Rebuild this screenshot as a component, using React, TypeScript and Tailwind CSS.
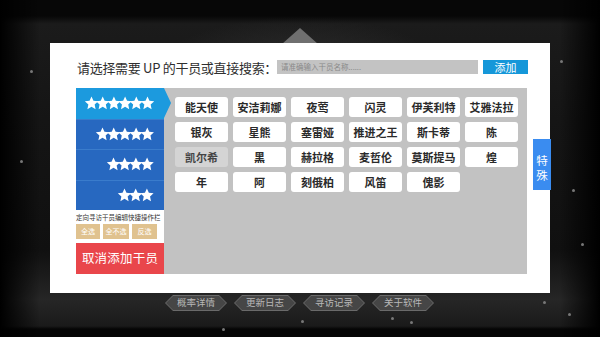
import React from 'react';

const rows = [
  ['能天使', '安洁莉娜', '夜莺', '闪灵', '伊芙利特', '艾雅法拉'],
  ['银灰', '星熊', '塞雷娅', '推进之王', '斯卡蒂', '陈'],
  ['凯尔希', '黑', '赫拉格', '麦哲伦', '莫斯提马', '煌'],
  ['年', '阿', '刻俄柏', '风笛', '傀影'],
];

const Stars = ({ n }: { n: number }) => {
  const pitch = 11.2;
  const w = Math.round(n * pitch + 3);
  const star = (cx: number) => {
    const pts: string[] = [];
    for (let i = 0; i < 10; i++) {
      const r = i % 2 === 0 ? 7 : 3.3;
      const a = (Math.PI / 5) * i - Math.PI / 2;
      pts.push(`${(cx + r * Math.cos(a)).toFixed(2)},${(7.5 + r * Math.sin(a)).toFixed(2)}`);
    }
    return pts.join(' ');
  };
  return (
    <svg width={w} height={15} viewBox={`0 0 ${w} 15`}>
      {Array.from({ length: n }).map((_, i) => (
        <polygon key={i} points={star(7.5 + i * pitch)} fill="#fff" />
      ))}
    </svg>
  );
};

const StarRow = ({ n, active }: { n: number; active?: boolean }) => (
  <div
    className={
      'relative h-[30.5px] flex items-center justify-end pr-[10px] ' +
      (active ? 'bg-[#1c9ade]' : 'bg-[#2768c0] border-t border-[#3a7ccc]')
    }
  >
    <Stars n={n} />
    {active && (
      <div className="absolute left-full top-0 w-0 h-0 border-y-[15px] border-y-transparent border-l-[7px] border-l-[#1c9ade]" />
    )}
  </div>
);

const dots = [
  [572, 189], [581, 243], [543, 301], [568, 313], [410, 321], [222, 328], [301, 320], [391, 317], [20, 160], [560, 60], [30, 70],
];

export default function App() {
  const font = { fontFamily: '"Noto Sans CJK SC", "Noto Sans", sans-serif' };
  return (
    <div
      className="relative w-[600px] h-[337px] overflow-hidden bg-[linear-gradient(180deg,#070707_0px,#070707_16px,#1b1b1b_24px,#151515_120px,#101010_250px,#262626_300px,#1a1a1a_326px,#050505_329px)]"
      style={font}
    >
      {/* background streaks */}
      <div className="absolute left-[150px] top-[16px] w-[300px] h-[120px] bg-[radial-gradient(ellipse_at_center,rgba(90,90,90,0.35),rgba(0,0,0,0)_70%)]" />
      <div className="absolute left-0 top-0 w-[40px] h-[337px] bg-[linear-gradient(90deg,#000,rgba(0,0,0,0))]" />
      <div className="absolute right-0 top-0 w-[40px] h-[337px] bg-[linear-gradient(270deg,#000,rgba(0,0,0,0))]" />
      {dots.map(([x, y], i) => (
        <div key={i} className="absolute w-[3px] h-[3px] rounded-full bg-[#777]" style={{ left: x, top: y }} />
      ))}
      {/* top triangle */}
      <div className="absolute left-[282px] top-[28px] w-0 h-0 border-x-[18px] border-x-transparent border-b-[16px] border-b-[#6f6f6f]" />

      <div className="relative flex flex-col pt-[43px] pl-[50px]">
        <div className="relative w-[500px] h-[250px] bg-white pt-[17px] pl-[26px]">
          <div className="flex items-center h-[14px]">
            <span className="w-[201px] shrink-0 whitespace-nowrap text-[13px] leading-none text-[#2f2f2f] pl-[1px] tracking-[-0.3px]">请选择需要 UP 的干员或直接搜索：</span>
            <div className="w-[201px] h-[14px] bg-[#c3c3c3] flex items-center pl-[4px]">
              <span className="text-[7.5px] leading-none text-[#8a8a8a]">请准确输入干员名称......</span>
            </div>
            <div className="ml-[5px] w-[45px] h-[14px] bg-[#1597d9] flex items-center justify-center">
              <span className="text-[11px] leading-none text-white">添加</span>
            </div>
          </div>

          <div className="mt-[14px] w-[451px] h-[186px] flex bg-[#c2c2c2]">
            <div className="w-[88px] flex flex-col bg-white">
              <div className="flex flex-col">
                <StarRow n={6} active />
                <StarRow n={5} />
                <StarRow n={4} />
                <StarRow n={3} />
              </div>
              <div className="pt-[3px] text-[6.5px] leading-[8px] text-[#333] whitespace-nowrap">定向寻访干员编辑快捷操作栏</div>
              <div className="flex gap-[3px] mt-[3px]">
                <div className="w-[24px] h-[15px] bg-[#e0c28f] flex items-center justify-center text-[7px] text-white">全选</div>
                <div className="w-[26px] h-[15px] bg-[#e0c28f] flex items-center justify-center text-[7px] text-white">全不选</div>
                <div className="w-[25px] h-[15px] bg-[#e0c28f] flex items-center justify-center text-[7px] text-white">反选</div>
              </div>
              <div className="mt-auto h-[31px] bg-[#e9464b] flex items-center justify-center text-[12.5px] text-white tracking-[0.2px]">
                取消添加干员
              </div>
            </div>
            <div className="pl-[11px] pt-[9px] grid grid-cols-[repeat(6,53px)] auto-rows-[20px] gap-[5px] content-start">
              {rows.flat().map((name) => (
                <div
                  key={name}
                  className={
                    'rounded-[3px] flex items-center justify-center text-[11px] font-bold ' +
                    (name === '凯尔希' ? 'bg-[#d4d4d4] text-[#444]' : 'bg-white text-[#2a2a2a]')
                  }
                >
                  {name}
                </div>
              ))}
            </div>
          </div>

          <div className="absolute right-[-1px] top-[96px] w-[18px] h-[51px] bg-[#3a8cf0] flex flex-col items-center pt-[14px] text-[11.5px] leading-[15px] text-white">
            <span>特</span>
            <span>殊</span>
          </div>
        </div>

        <div className="flex gap-[7px] ml-[115px] mt-[2px]">
          {['概率详情', '更新日志', '寻访记录', '关于软件'].map((t) => (
            <div
              key={t}
              className="w-[62px] h-[16px] bg-[#6a6a6a] [clip-path:polygon(8px_0,54px_0,62px_50%,54px_100%,8px_100%,0_50%)] flex items-center justify-center"
            >
              <div className="w-[60px] h-[14px] bg-[#464646] [clip-path:polygon(7px_0,53px_0,60px_50%,53px_100%,7px_100%,0_50%)] flex items-center justify-center text-[9.5px] leading-none text-[#b8b8b8]">
                {t}
              </div>
            </div>
          ))}
        </div>
      </div>
    </div>
  );
}
